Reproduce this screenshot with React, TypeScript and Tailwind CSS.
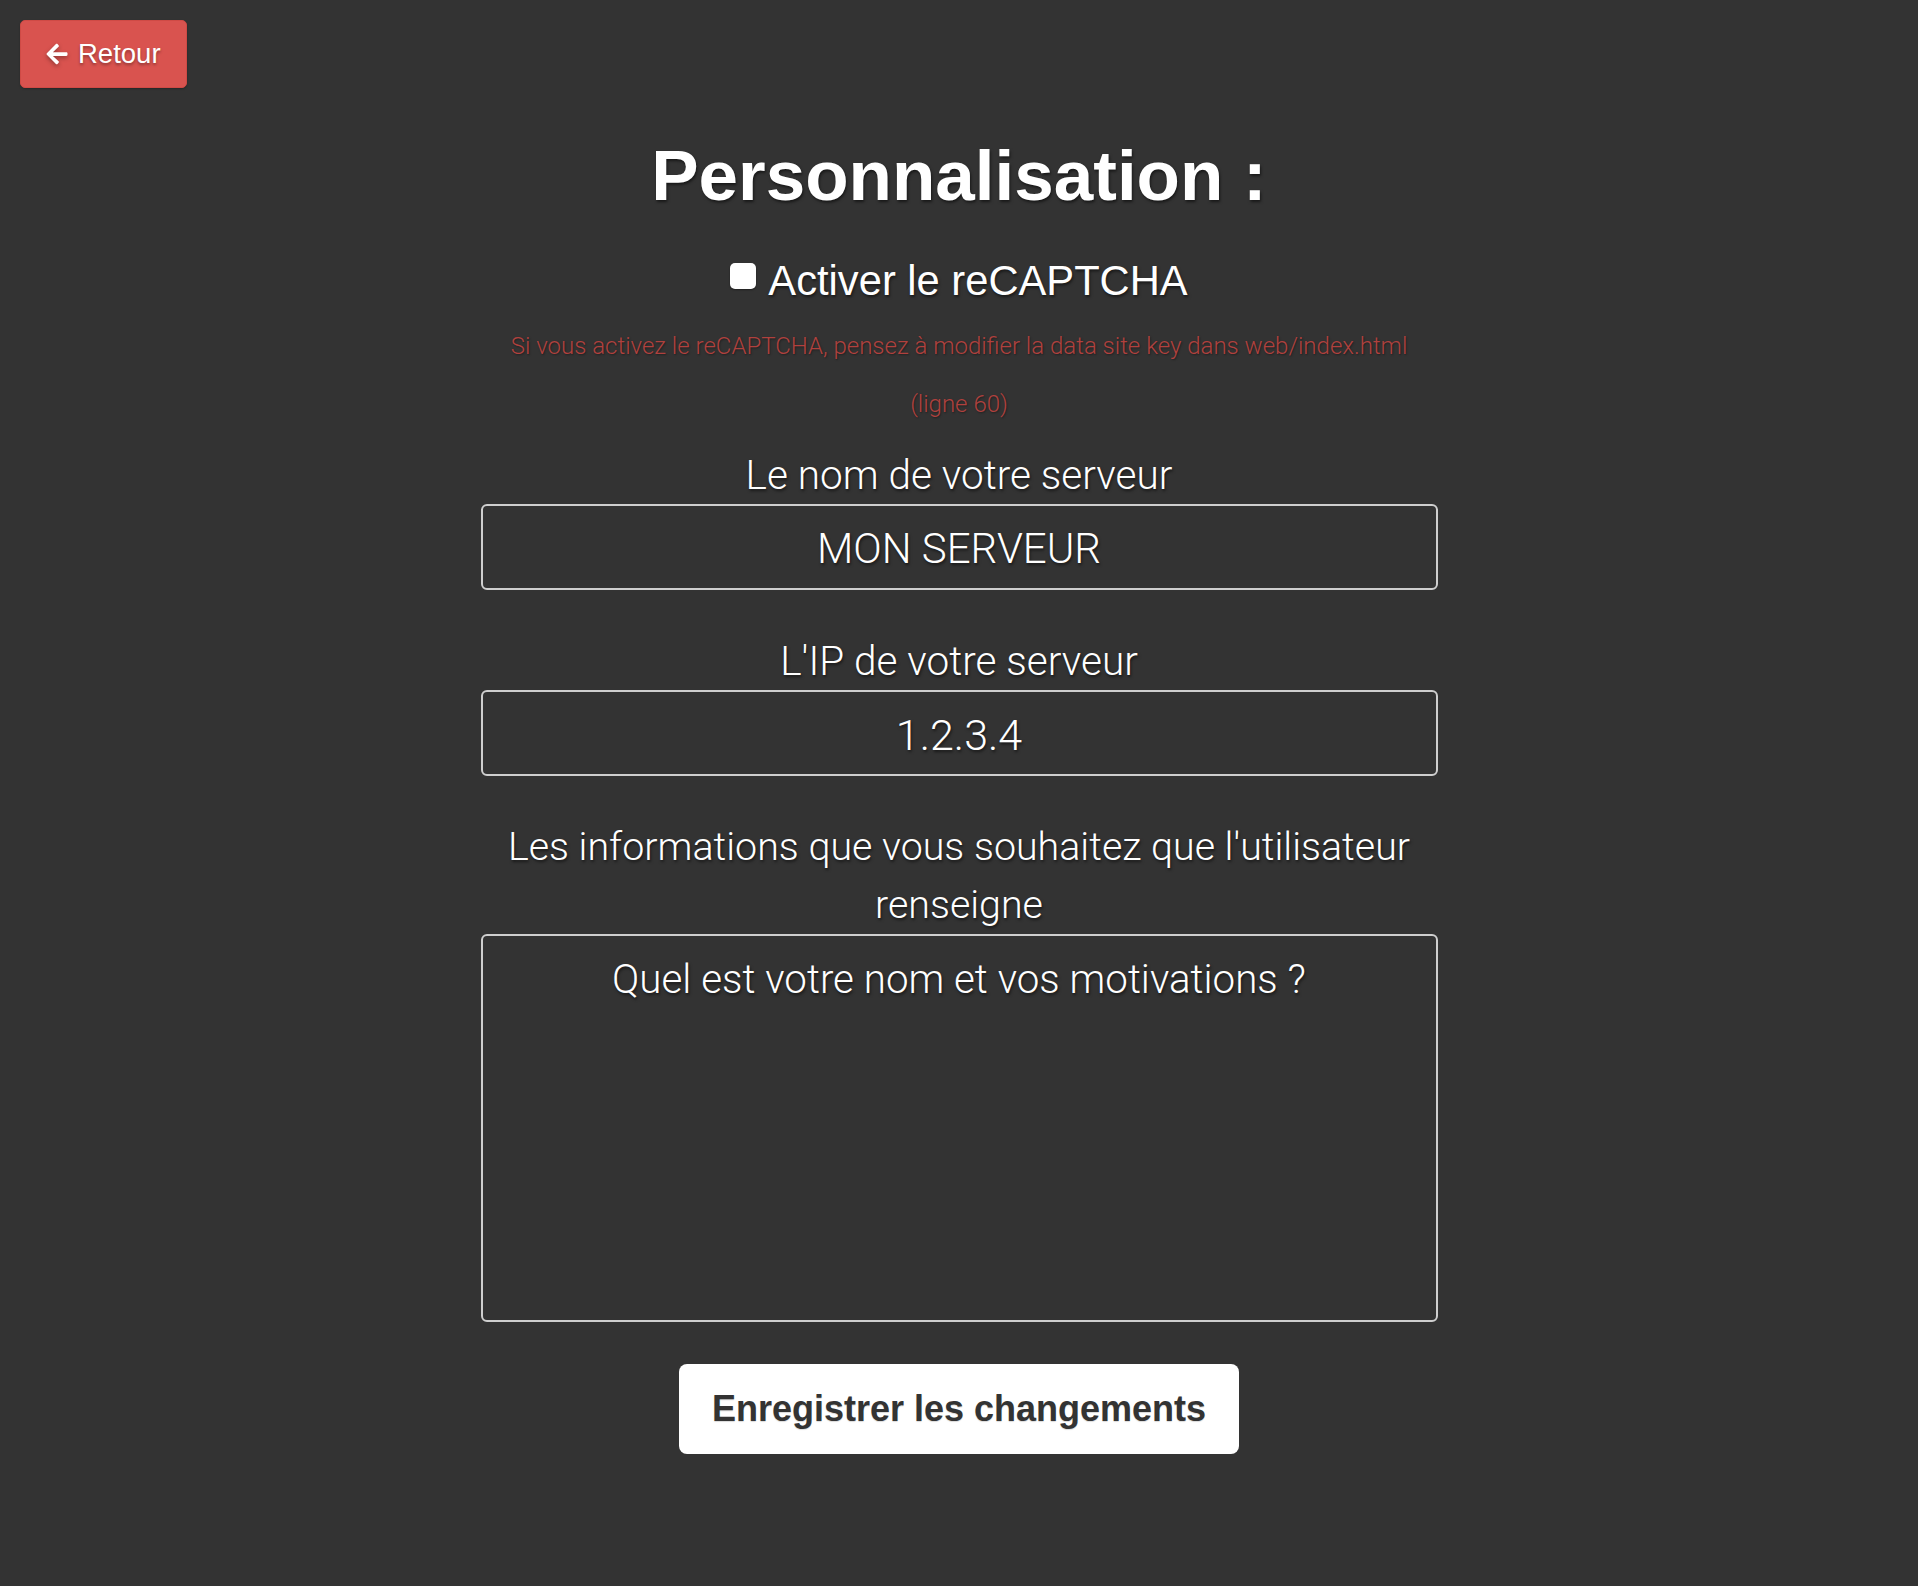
import React from "react";
import { FaArrowLeft } from "react-icons/fa";

const shadow = "[text-shadow:1px_2px_3px_rgba(0,0,0,0.55)]";

export default function App() {
  return (
    <div className="min-h-screen w-full bg-[#333333] text-white font-['Liberation_Sans',Arial,sans-serif]">
      <div className="pt-5 pl-5">
        <button
          type="button"
          className="flex h-[68px] items-center gap-[9px] rounded-[5px] border border-[#cf4a45] bg-[#d9534f] pl-[24px] pr-[25px] text-[27.5px] text-white shadow-[0_1px_2px_rgba(0,0,0,0.25)] [text-shadow:0_2px_3px_rgba(0,0,0,0.35)]"
        >
          <FaArrowLeft className="h-[24px] w-[24px] drop-shadow-[0_2px_2px_rgba(0,0,0,0.35)]" />
          <span>Retour</span>
        </button>
      </div>

      <div className="mx-auto flex w-[957px] flex-col items-center">
        <h1 className={`mt-[45px] text-[71px] font-bold leading-[85px] ${shadow}`}>
          Personnalisation :
        </h1>

        <label className={`mt-[33px] flex h-[60px] items-center gap-[12px] text-[41.7px] ${shadow}`}>
          <input
            type="checkbox"
            className="-mt-[10px] h-[26px] w-[26px] appearance-none rounded-[5px] bg-white shadow-[0_1px_2px_rgba(0,0,0,0.4)]"
          />
          <span>Activer le reCAPTCHA</span>
        </label>

        <p className="mt-[6px] text-center font-['Roboto',sans-serif] text-[24px] font-light leading-[58px] text-[#b0413e] [text-shadow:1px_1px_2px_rgba(0,0,0,0.4)]">
          Si vous activez le reCAPTCHA, pensez à modifier la data site key dans web/index.html (ligne 60)
        </p>

        <label className={`mt-[13px] text-center font-['Roboto',sans-serif] text-[40.5px] font-light leading-[58px] ${shadow}`}>
          Le nom de votre serveur
        </label>
        <input
          type="text"
          defaultValue="MON SERVEUR"
          className={`h-[86px] w-full rounded-[6px] border-2 border-[#cfcfcf] bg-transparent pt-[3px] text-center font-['Roboto',sans-serif] text-[42px] font-light text-white outline-none ${shadow}`}
        />

        <label className={`mt-[42px] text-center font-['Roboto',sans-serif] text-[40.5px] font-light leading-[58px] ${shadow}`}>
          L'IP de votre serveur
        </label>
        <input
          type="text"
          defaultValue="1.2.3.4"
          className={`h-[86px] w-full rounded-[6px] border-2 border-[#cfcfcf] bg-transparent pt-[3px] text-center font-['Roboto',sans-serif] text-[43px] font-light text-white outline-none ${shadow}`}
        />

        <label className={`mt-[42px] text-center font-['Roboto',sans-serif] text-[39.4px] font-light leading-[58px] ${shadow}`}>
          Les informations que vous souhaitez que l'utilisateur renseigne
        </label>
        <textarea
          defaultValue="Quel est votre nom et vos motivations ?"
          className={`h-[388px] w-full resize-none rounded-[6px] border-2 border-[#cfcfcf] bg-transparent px-4 pt-[15px] text-center font-['Roboto',sans-serif] text-[40.3px] font-light leading-[58px] text-white outline-none ${shadow}`}
        />

        <button
          type="button"
          className="mt-[42px] h-[90px] rounded-[8px] bg-white px-[33px] text-[36px] font-bold text-[#333333] [text-shadow:0_1px_1px_rgba(0,0,0,0.15)]"
        >
          Enregistrer les changements
        </button>
      </div>
    </div>
  );
}
